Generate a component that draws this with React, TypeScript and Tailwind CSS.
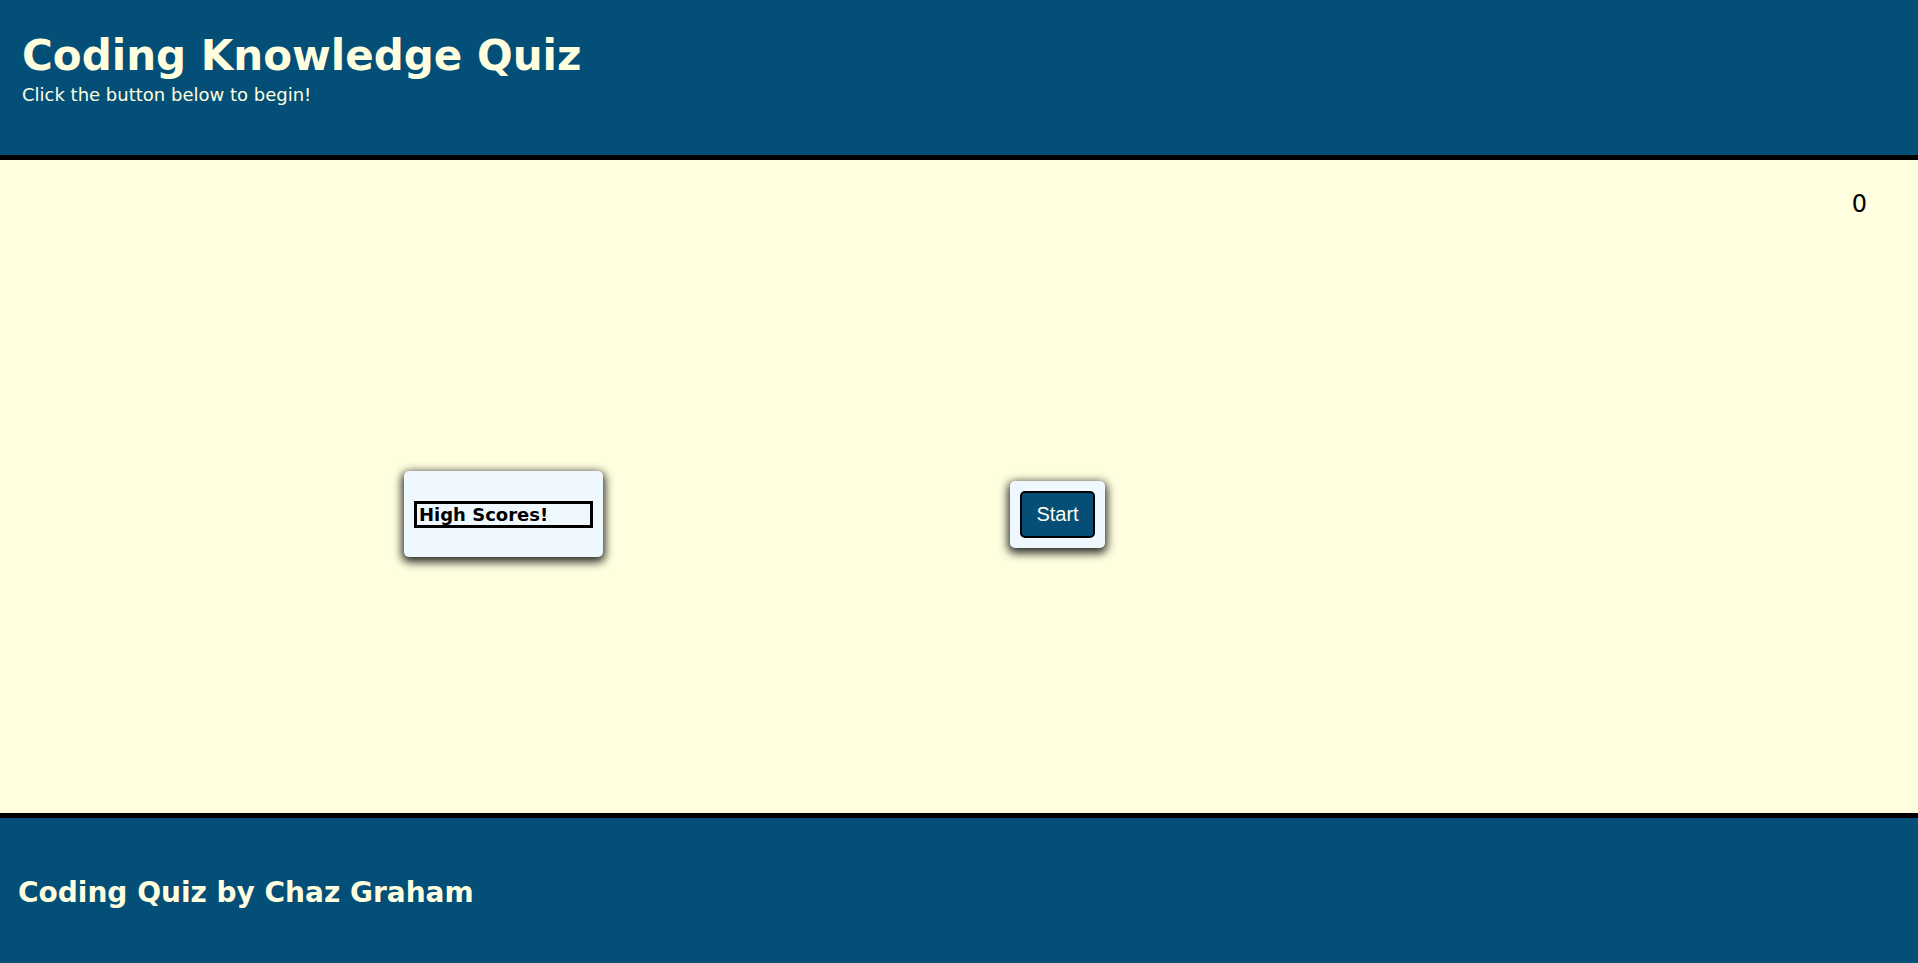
import React, { useState } from 'react';

export default function App() {
  const [score] = useState(0);

  return (
    <div className="flex h-[963px] w-full flex-col font-['DejaVu_Sans',Verdana,sans-serif]">
      {/* Header */}
      <header className="h-[160px] shrink-0 border-b-[5px] border-black bg-[#044f77] pl-[22px] pt-[35px] text-[#ffffe0]">
        <h1 className="text-[42px] font-bold leading-[42px]">Coding Knowledge Quiz</h1>
        <p className="mt-[9px] text-[18px] leading-[18px]">Click the button below to begin!</p>
      </header>

      {/* Main quiz area */}
      <main className="flex h-[653px] shrink-0 flex-col bg-[#ffffe0]">
        <div className="pr-[51px] pt-[30px] text-right text-[24px] leading-[28px] text-black">{score}</div>
        <div className="flex flex-1 items-center pb-[3px] pl-[404px]">
          <div className="flex h-[86px] w-[199px] items-center rounded-[5px] bg-[#f0f8ff] px-[10px] shadow-[0_3px_10px_2px_rgba(0,0,0,0.85)]">
            <button
              type="button"
              className="h-[27px] w-[180px] border-[3px] border-black pl-[2px] text-left text-[18px] font-bold leading-[21px] text-black"
            >
              High Scores!
            </button>
          </div>
          <div className="ml-[407px] rounded-[5px] bg-[#f0f8ff] p-[10px] shadow-[0_3px_10px_2px_rgba(0,0,0,0.85)]">
            <button
              type="button"
              className="h-[47px] w-[75px] rounded-[5px] border-2 border-black bg-[#054f77] font-['Liberation_Sans',Arial,sans-serif] text-[20px] text-[#fffff0]"
            >
              Start
            </button>
          </div>
        </div>
      </main>

      {/* Footer */}
      <footer className="flex h-[150px] shrink-0 items-center border-t-[5px] border-black bg-[#044f77] pl-[18px] pt-1">
        <h2 className="text-[28px] font-bold leading-[28px] text-[#ffffe0]">Coding Quiz by Chaz Graham</h2>
      </footer>
    </div>
  );
}
